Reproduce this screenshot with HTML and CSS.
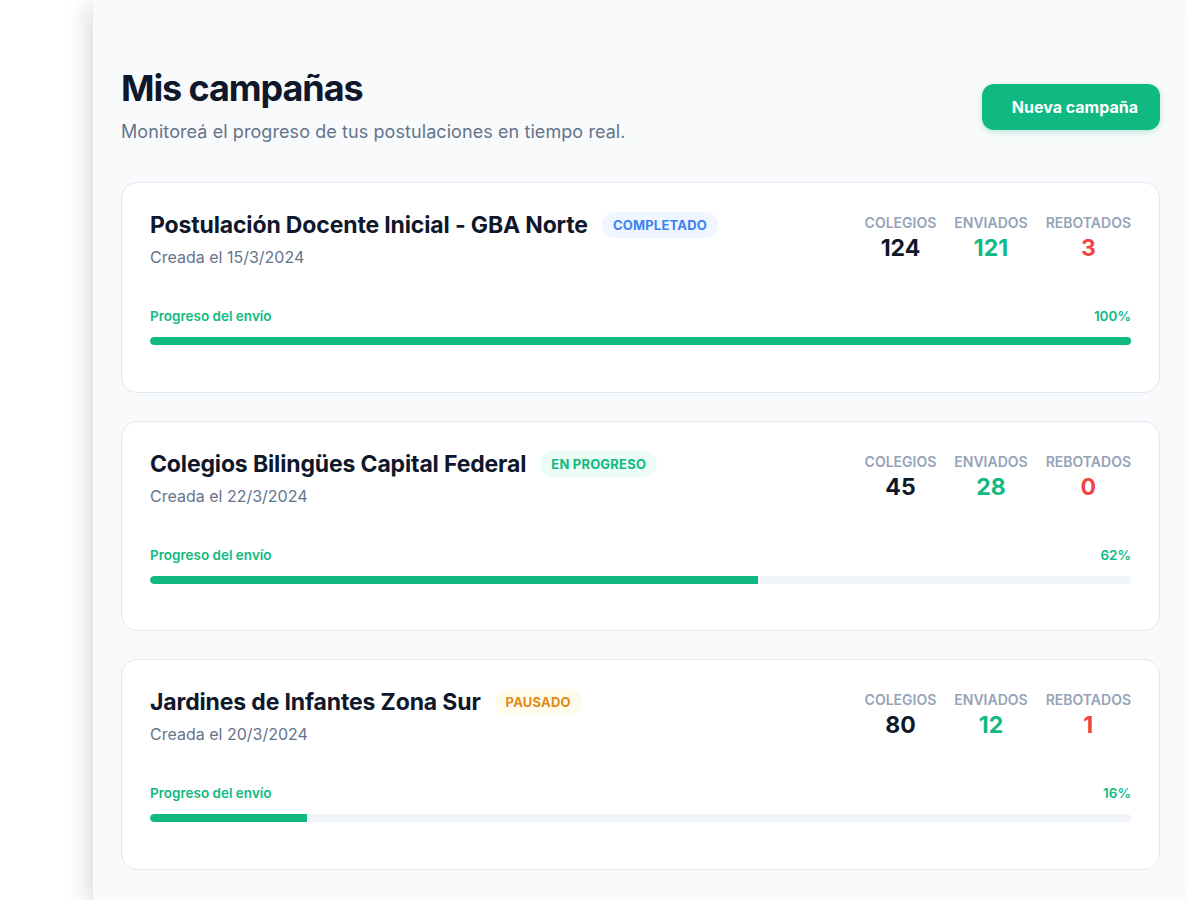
FILE: index.html
```html
<!DOCTYPE html>
<html lang="es">
<head>
<meta charset="utf-8">
<title>Mis campañas</title>
<link rel="stylesheet" href="styles.css">
</head>
<body>
<main class="panel">
  <header class="page-head">
    <div class="head-text">
      <h1 class="title">Mis campañas</h1>
      <p class="subtitle">Monitoreá el progreso de tus postulaciones en tiempo real.</p>
    </div>
    <button class="btn-new">Nueva campaña</button>
  </header>

  <section class="cards">
    <article class="card">
      <div class="card-top">
        <div class="card-info">
          <div class="name-row">
            <h2 class="name">Postulación Docente Inicial - GBA Norte</h2>
            <span class="badge badge-done">COMPLETADO</span>
          </div>
          <p class="date">Creada el 15/3/2024</p>
        </div>
        <div class="stats">
          <div class="stat"><span class="stat-label">COLEGIOS</span><span class="stat-num">124</span></div>
          <div class="stat"><span class="stat-label">ENVIADOS</span><span class="stat-num green">121</span></div>
          <div class="stat"><span class="stat-label">REBOTADOS</span><span class="stat-num red">3</span></div>
        </div>
      </div>
      <div class="progress">
        <div class="progress-row"><span>Progreso del envío</span><span>100%</span></div>
        <div class="track"><div class="fill" style="width:100%"></div></div>
      </div>
    </article>

    <article class="card">
      <div class="card-top">
        <div class="card-info">
          <div class="name-row">
            <h2 class="name">Colegios Bilingües Capital Federal</h2>
            <span class="badge badge-progress">EN PROGRESO</span>
          </div>
          <p class="date">Creada el 22/3/2024</p>
        </div>
        <div class="stats">
          <div class="stat"><span class="stat-label">COLEGIOS</span><span class="stat-num">45</span></div>
          <div class="stat"><span class="stat-label">ENVIADOS</span><span class="stat-num green">28</span></div>
          <div class="stat"><span class="stat-label">REBOTADOS</span><span class="stat-num red">0</span></div>
        </div>
      </div>
      <div class="progress">
        <div class="progress-row"><span>Progreso del envío</span><span>62%</span></div>
        <div class="track"><div class="fill" style="width:62%"></div></div>
      </div>
    </article>

    <article class="card">
      <div class="card-top">
        <div class="card-info">
          <div class="name-row">
            <h2 class="name">Jardines de Infantes Zona Sur</h2>
            <span class="badge badge-paused">PAUSADO</span>
          </div>
          <p class="date">Creada el 20/3/2024</p>
        </div>
        <div class="stats">
          <div class="stat"><span class="stat-label">COLEGIOS</span><span class="stat-num">80</span></div>
          <div class="stat"><span class="stat-label">ENVIADOS</span><span class="stat-num green">12</span></div>
          <div class="stat"><span class="stat-label">REBOTADOS</span><span class="stat-num red">1</span></div>
        </div>
      </div>
      <div class="progress">
        <div class="progress-row"><span>Progreso del envío</span><span>16%</span></div>
        <div class="track"><div class="fill" style="width:16%"></div></div>
      </div>
    </article>
  </section>
</main>
</body>
</html>
```

FILE: styles.css
```css
* { box-sizing: border-box; }
html, body { margin: 0; padding: 0; }
body {
  background: #ffffff;
  font-family: Inter, "Noto Sans", "Liberation Sans", sans-serif;
  color: #0f172a;
  overflow: hidden;
}
.panel {
  margin-left: 93px;
  width: 1093px;
  min-height: 900px;
  background: #f8fafc;
  padding: 68px 26px 40px 28px;
  box-shadow: -12px 0 22px -6px rgba(0, 0, 0, 0.14);
}
.page-head {
  display: flex;
  align-items: center;
  justify-content: space-between;
}
.title {
  margin: 0;
  font-size: 36px;
  line-height: 40px;
  font-weight: 700;
  color: #0f172a;
  letter-spacing: -1.1px;
}
.subtitle {
  margin: 10px 0 0;
  font-size: 18px;
  line-height: 28px;
  color: #64748b;
  letter-spacing: 0.08px;
}
.btn-new {
  height: 46px;
  padding: 0 22px 0 30px;
  border: none;
  border-radius: 12px;
  background: #10b981;
  color: #ffffff;
  font-family: inherit;
  font-size: 16px;
  font-weight: 700;
  box-shadow: 0 2px 6px rgba(16, 185, 129, 0.25);
}
.cards {
  margin-top: 36px;
  display: flex;
  flex-direction: column;
  gap: 28px;
}
.card {
  background: #ffffff;
  border: 1px solid #e2e8f0;
  border-radius: 16px;
  padding: 28px 28px 46.5px 28px;
}
.card-top {
  display: flex;
  justify-content: space-between;
  align-items: flex-start;
}
.name-row {
  display: flex;
  align-items: center;
  gap: 14px;
}
.name {
  margin: 0;
  font-size: 23px;
  line-height: 28px;
  font-weight: 700;
  color: #0f172a;
  letter-spacing: -0.15px;
}
.badge {
  display: inline-flex;
  align-items: center;
  height: 26px;
  padding: 0 11px;
  border-radius: 13px;
  font-size: 13px;
  font-weight: 700;
  letter-spacing: 0.2px;
}
.badge-done { background: #eff6ff; color: #3b82f6; }
.badge-progress { background: #ecfdf5; color: #10b981; }
.badge-paused { background: #fffbeb; color: #e08a1a; }
.date {
  margin: 6px 0 0;
  font-size: 16px;
  line-height: 24px;
  color: #64748b;
}
.stats {
  display: flex;
  gap: 18px;
  padding-top: 2px;
}
.stat {
  display: flex;
  flex-direction: column;
  align-items: center;
}
.stat-label {
  font-size: 14px;
  line-height: 20px;
  font-weight: 600;
  color: #94a3b8;
}
.stat-num {
  margin-top: 1px;
  font-size: 23px;
  line-height: 28px;
  font-weight: 700;
  color: #0f172a;
}
.stat-num.green { color: #10b981; }
.stat-num.red { color: #ef4444; }
.progress { margin-top: 38px; }
.progress-row {
  display: flex;
  justify-content: space-between;
  font-size: 13.5px;
  line-height: 18px;
  font-weight: 600;
  color: #10b981;
}
.track {
  margin-top: 12px;
  height: 8px;
  border-radius: 4px;
  background: #f1f5f9;
  overflow: hidden;
}
.fill {
  height: 100%;
  background: #10b981;
  border-radius: 4px 0 0 4px;
}
```
